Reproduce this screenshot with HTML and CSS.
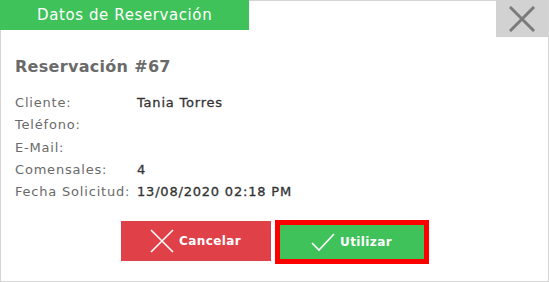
FILE: index.html
```html
<!DOCTYPE html>
<html lang="es">
<head>
<meta charset="utf-8">
<title>Datos de Reservación</title>
<link rel="stylesheet" href="styles.css">
</head>
<body>
<div class="dialog">
  <div class="header">
    <div class="title">Datos de Reservación</div>
    <button class="close" aria-label="Cerrar">
      <svg width="26" height="26" viewBox="0 0 26 26"><path d="M2 2 L24 24 M24 2 L2 24" stroke="#7b7b7b" stroke-width="3" stroke-linecap="square" fill="none"/></svg>
    </button>
  </div>
  <div class="content">
    <h2 class="heading">Reservación #67</h2>
    <div class="details">
      <div class="label">Cliente:</div><div class="value">Tania Torres</div>
      <div class="label">Teléfono:</div><div class="value"></div>
      <div class="label">E-Mail:</div><div class="value"></div>
      <div class="label">Comensales:</div><div class="value">4</div>
      <div class="label">Fecha Solicitud:</div><div class="value">13/08/2020 02:18 PM</div>
    </div>
  </div>
  <div class="actions">
    <button class="btn btn-cancel">
      <svg width="24" height="24" viewBox="0 0 24 24"><path d="M1 1 L23 23 M23 1 L1 23" stroke="#fff" stroke-width="1.6" fill="none"/></svg>
      <span>Cancelar</span>
    </button>
    <button class="btn btn-ok">
      <svg width="24" height="20" viewBox="0 0 24 20"><path d="M1 11 L8 18 L23 2" stroke="#fff" stroke-width="1.6" fill="none"/></svg>
      <span>Utilizar</span>
    </button>
  </div>
</div>
</body>
</html>
```
FILE: styles.css
```css
html, body {
  margin: 0;
  padding: 0;
  background: #fff;
}
body {
  font-family: "DejaVu Sans", Verdana, sans-serif;
}
.dialog {
  width: 549px;
  height: 282px;
  box-sizing: border-box;
  border: 1px solid #d4d4d4;
  background: #fff;
  display: flex;
  flex-direction: column;
}
.header {
  display: flex;
  justify-content: space-between;
  align-items: flex-start;
  margin: -1px 0 0 -1px;
  height: 37px;
}
.title {
  width: 249px;
  height: 30px;
  background: #40c25a;
  color: #fff;
  font-size: 15px;
  letter-spacing: 0.6px;
  line-height: 30px;
  box-sizing: border-box;
  padding-left: 37px;
}
.close {
  width: 52px;
  height: 37px;
  border: 0;
  padding: 0;
  margin: 0;
  background: #d2d2d2;
  display: flex;
  align-items: center;
  justify-content: center;
}
.content {
  padding: 18px 0 0 14px;
}
.heading {
  margin: 0;
  font-size: 16px;
  letter-spacing: 0.3px;
  line-height: 24px;
  font-weight: bold;
  color: #6a6a6a;
}
.details {
  display: grid;
  grid-template-columns: 122px auto;
  grid-auto-rows: 22.3px;
  margin-top: 13px;
  font-size: 13px;
  letter-spacing: 0.8px;
  line-height: 22px;
}
.label {
  color: #6a6a6a;
}
.value {
  color: #333;
  -webkit-text-stroke: 0.3px #333;
}
.actions {
  display: flex;
  justify-content: center;
  align-items: center;
  gap: 4px;
  margin-top: 15px;
}
.btn {
  border: 0;
  margin: 0;
  padding: 0;
  color: #fff;
  font-family: "DejaVu Sans", Verdana, sans-serif;
  font-weight: bold;
  font-size: 12px;
  letter-spacing: 0.4px;
  display: flex;
  align-items: center;
  justify-content: center;
  gap: 5px;
}
.btn-cancel {
  width: 150px;
  height: 40px;
  background: #e04048;
}
.btn-ok {
  width: 154px;
  height: 44px;
  box-sizing: border-box;
  border: 5px solid #ff0000;
  background: #40c25a;
  margin-top: 2px;
}
```
